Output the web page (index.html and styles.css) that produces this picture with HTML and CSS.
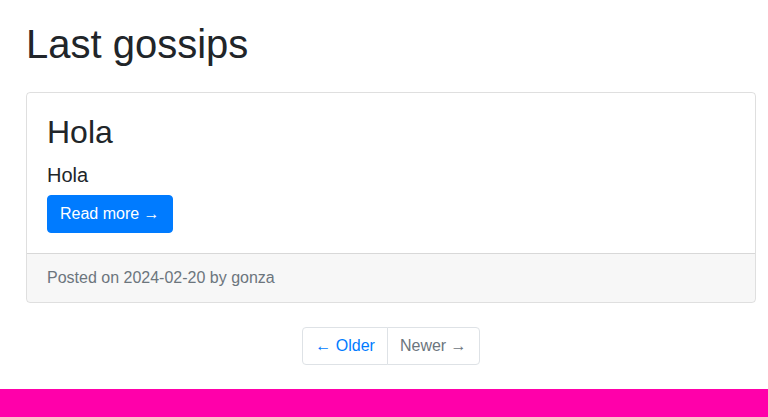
FILE: index.html
```html
<!DOCTYPE html>
<html lang="en">
<head>
<meta charset="utf-8">
<title>Last gossips</title>
<link rel="stylesheet" href="styles.css">
</head>
<body>
<main class="page">
  <h1 class="page-title">Last gossips</h1>
  <article class="card">
    <div class="card-body">
      <h2 class="card-title">Hola</h2>
      <h5 class="card-text">Hola</h5>
      <a class="btn" href="#">Read more &rarr;</a>
    </div>
    <div class="card-footer">Posted on 2024-02-20 by gonza</div>
  </article>
  <ul class="pagination">
    <li class="page-item"><a class="page-link" href="#">&larr; Older</a></li>
    <li class="page-item disabled"><span class="page-link">Newer &rarr;</span></li>
  </ul>
</main>
<footer class="site-footer"></footer>
</body>
</html>
```

FILE: styles.css
```css
* { box-sizing: border-box; }
html, body { margin: 0; padding: 0; }
body {
  font-family: "Liberation Sans", Arial, sans-serif;
  font-size: 16px;
  line-height: 1.5;
  color: #212529;
  background: #fff;
}
.page {
  padding: 20px 12px 0 26px;
}
.page-title {
  margin: 0 0 24px;
  font-size: 40px;
  font-weight: 500;
  line-height: 1.2;
}
.card {
  border: 1px solid rgba(0,0,0,.125);
  border-radius: 4px;
  margin-bottom: 24px;
  overflow: hidden;
}
.card-body { padding: 20px; }
.card-title {
  margin: 0 0 12px;
  font-size: 32px;
  font-weight: 500;
  line-height: 1.2;
}
.card-text {
  margin: 0 0 8px;
  font-size: 20px;
  font-weight: 500;
  line-height: 1.2;
}
.btn {
  display: inline-block;
  padding: 6px 12px;
  font-size: 16px;
  line-height: 1.5;
  color: #fff;
  background: #007bff;
  border: 1px solid #007bff;
  border-radius: 4px;
  text-decoration: none;
}
.card-footer {
  padding: 12px 20px;
  background: rgba(0,0,0,.03);
  border-top: 1px solid rgba(0,0,0,.125);
  color: #6c757d;
}
.pagination {
  display: flex;
  justify-content: center;
  list-style: none;
  margin: 0 0 24px;
  padding: 0;
}
.page-link {
  display: block;
  padding: 8px 12px;
  line-height: 1.25;
  color: #007bff;
  background: #fff;
  border: 1px solid #dee2e6;
  text-decoration: none;
}
.page-item:first-child .page-link {
  border-radius: 4px 0 0 4px;
}
.page-item:last-child .page-link {
  border-radius: 0 4px 4px 0;
  margin-left: -1px;
}
.page-item.disabled .page-link { color: #6c757d; }
.site-footer {
  height: 28px;
  background: #ff00aa;
}
```
